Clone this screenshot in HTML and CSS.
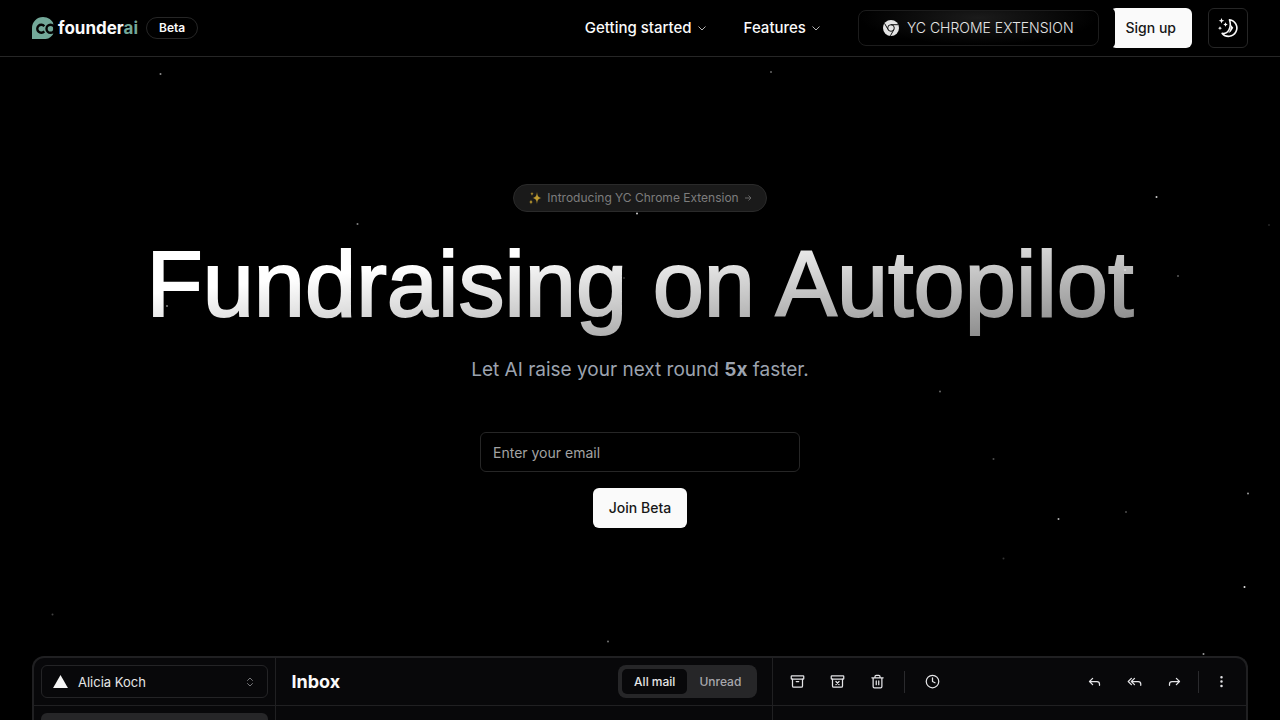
FILE: index.html
```html
<!DOCTYPE html>
<html lang="en">
<head>
    <meta charset="UTF-8">
    <meta name="viewport" content="width=device-width, initial-scale=1">
    <title>cofounderai</title>

    <link rel="stylesheet" href="styles.css">
</head>
<body>
<svg class="stars" viewBox="0 0 1280 720" preserveAspectRatio="xMidYMin slice" aria-hidden="true">
    <circle cx="160.500" cy="74" r="1" opacity=".55"/>
    <circle cx="771" cy="72" r="1" opacity=".4"/>
    <circle cx="1156.500" cy="197" r="1" opacity=".8"/>
    <circle cx="357.500" cy="224" r="1" opacity=".5"/>
    <circle cx="637" cy="213.500" r="1" opacity=".8"/>
    <circle cx="1269" cy="225" r="1" opacity=".15"/>
    <circle cx="1178" cy="276" r="1" opacity=".35"/>
    <circle cx="167" cy="306" r="1" opacity=".5"/>
    <circle cx="1125" cy="270" r="1" opacity=".4"/>
    <circle cx="624" cy="278" r="1" opacity=".2"/>
    <circle cx="940" cy="391.500" r="1" opacity=".4"/>
    <circle cx="993.500" cy="459" r="1" opacity=".3"/>
    <circle cx="1248" cy="493.500" r="1" opacity=".6"/>
    <circle cx="1126" cy="512" r="1" opacity=".3"/>
    <circle cx="1058.500" cy="519" r="1" opacity=".7"/>
    <circle cx="1003.500" cy="558.500" r="1" opacity=".2"/>
    <circle cx="1244.500" cy="587" r="1" opacity=".9"/>
    <circle cx="52.500" cy="614.500" r="1" opacity=".25"/>
    <circle cx="608" cy="641.500" r="1" opacity=".45"/>
    <circle cx="1203.500" cy="654" r="1" opacity=".6"/>
</svg>

<header class="header">
    <a class="brand" href="#">
        <svg class="logo" viewBox="0 0 24 22" aria-hidden="true">
            <path fill="#73a899" d="M0 22V11A11 11 0 0 1 11 0c5 0 9.300 3 11 7.500v8A11 11 0 0 1 11 22z"/>
            <path fill="none" stroke="#050505" stroke-width="2.400" d="M12.300 9.200a4 4 0 1 0 0 5.200"/>
            <circle cx="18.500" cy="11.800" r="4" fill="none" stroke="#050505" stroke-width="2.400"/>
            <path fill="#000" d="M21.300 6H24v12h-2.700z"/>
        </svg>
        <span class="wordmark">founder<span class="ai">ai</span></span>
    </a>
    <span class="badge">Beta</span>

    <nav class="nav">
        <button class="navItem">Getting started
            <svg class="chevron" viewBox="0 0 24 24"><path d="m5 9 7 7 7-7"/></svg>
        </button>
        <button class="navItem">Features
            <svg class="chevron" viewBox="0 0 24 24"><path d="m5 9 7 7 7-7"/></svg>
        </button>
    </nav>
    <div class="extensionHolder">
        <a class="extension" href="#">
            <svg class="chrome" viewBox="0 0 16 16" aria-hidden="true">
                <circle cx="8" cy="8" r="8" fill="#e4e4e4"/>
                <circle cx="8" cy="8" r="3.300" fill="none" stroke="#111"/>
                <path fill="none" stroke="#111" d="M8 4.700h7.300M5.100 9.600 1.600 3.500M10.900 9.600l-3.500 6.200"/>
            </svg>
            YC CHROME EXTENSION
        </a>
    </div>
    <a class="btn signUp" href="#">Sign up</a>
    <button class="themeToggle" aria-label="Toggle theme">
        <svg viewBox="0 0 20 20" aria-hidden="true">
            <path fill="none" stroke="#fafafa" stroke-width="1.600" stroke-linejoin="round" d="M11.500 1.800a8.300 8.300 0 1 1-7.300 13.600c5.800.8 9.800-5.700 7.300-13.600z"/>
            <path fill="#fafafa" d="m3.500 0 .8 2 2 .8-2 .8-.8 2-.8-2-2-.8 2-.8zM7.500 4.300l.7 1.500 1.500.7-1.500.7-.7 1.500-.7-1.500-1.500-.7 1.500-.7zM2 8.200l.6 1.400 1.400.6-1.400.6L2 12.200l-.6-1.400-1.400-.6 1.400-.6zM13 7l2.300 2.800-2.600 4-2.500 1.500c1.800-2.400 2.600-5 2.800-8.300z"/>
        </svg>
    </button>
</header>

<main class="main">
    <section class="hero">
        <a class="announce" href="#">
            <svg class="sparkles" viewBox="0 0 14 14" aria-hidden="true">
                <path d="M9 1c.5 4 1 5.200 4.500 6C10 7.800 9.500 9 9 13 8.500 9 8 7.800 4.500 7 8 6.200 8.500 5 9 1zM3 8.500c.3 1.800.7 2.200 2 2.500-1.300.3-1.700.7-2 2.500-.3-1.800-.7-2.200-2-2.500 1.300-.3 1.700-.7 2-2.500zM4 .8c.2 1.400.5 1.700 1.700 2C4.500 3.100 4.200 3.500 4 4.900c-.2-1.400-.5-1.800-1.700-2.100C3.500 2.500 3.800 2.200 4 .8z"/>
            </svg>
            <span>Introducing YC Chrome Extension</span>
            <svg class="arrow" viewBox="0 0 8 8" aria-hidden="true"><path d="M1 4h6M4.500 1.500 7 4 4.500 6.500"/></svg>
        </a>
        <h1 class="title">Fundraising on Autopilot</h1>
        <p class="subtitle">Let AI raise your next round <b>5x</b> faster.</p>
        <form class="signupForm">
            <input type="email" class="email" placeholder="Enter your email" aria-label="Email">
            <button class="btn" type="submit">Join Beta</button>
        </form>
    </section>

    <section class="mail">
        <div class="cell">
            <button class="account">
                <svg class="triangle" viewBox="0 0 16 14"><path d="M8 0l8 14H0z"/></svg>
                Alicia Koch
                <svg class="icon sorter" viewBox="0 0 24 24"><path d="m7 15 5 5 5-5M7 9l5-5 5 5"/></svg>
            </button>
        </div>
        <div class="cell inboxBar">
            <h2 class="inbox">Inbox</h2>
            <div class="tabs">
                <button class="tab active">All mail</button>
                <button class="tab">Unread</button>
            </div>
        </div>
        <div class="cell toolbar">
            <button class="tool" aria-label="Archive"><svg class="icon" viewBox="0 0 24 24"><rect x="2" y="3" width="20" height="5" rx="1"/><path d="M4 8v11a2 2 0 0 0 2 2h12a2 2 0 0 0 2-2V8M10 12h4"/></svg></button>
            <button class="tool" aria-label="Move to junk"><svg class="icon" viewBox="0 0 24 24"><rect x="2" y="3" width="20" height="5" rx="1"/><path d="M4 8v11a2 2 0 0 0 2 2h12a2 2 0 0 0 2-2V8M9.500 17l5-5M9.500 12l5 5"/></svg></button>
            <button class="tool" aria-label="Move to trash"><svg class="icon" viewBox="0 0 24 24"><path d="M3 6h18M19 6v14a2 2 0 0 1-2 2H7a2 2 0 0 1-2-2V6M8 6V4a2 2 0 0 1 2-2h4a2 2 0 0 1 2 2v2M10 11v6M14 11v6"/></svg></button>
            <span class="divider wide"></span>
            <button class="tool" aria-label="Snooze"><svg class="icon" viewBox="0 0 24 24"><circle cx="12" cy="12" r="10"/><path d="M12 6v6l4 2"/></svg></button>
            <span class="spacer"></span>
            <button class="tool" aria-label="Reply"><svg class="icon" viewBox="0 0 24 24"><path d="m9 17-5-5 5-5M20 18v-2a4 4 0 0 0-4-4H4"/></svg></button>
            <button class="tool" aria-label="Reply all"><svg class="icon" viewBox="0 0 24 24"><path d="m7 17-5-5 5-5M12 17l-5-5 5-5M22 18v-2a4 4 0 0 0-4-4H7"/></svg></button>
            <button class="tool" aria-label="Forward"><svg class="icon" viewBox="0 0 24 24"><path d="m15 17 5-5-5-5M4 18v-2a4 4 0 0 1 4-4h12"/></svg></button>
            <span class="divider"></span>
            <button class="tool" aria-label="More"><svg class="icon" viewBox="0 0 24 24"><circle cx="12" cy="5" r="1"/><circle cx="12" cy="12" r="1"/><circle cx="12" cy="19" r="1"/></svg></button>
        </div>
        <div class="pane"><div class="folder"></div></div>
        <div class="pane"></div>
        <div class="pane"></div>
    </section>
</main>
</body>
</html>
```
FILE: styles.css
```css
* {
    box-sizing: border-box;
}

body {
    margin: 0;
    min-height: 100vh;
    display: flex;
    flex-direction: column;
    position: relative;
    background-color: #000;
    color: #fafafa;
    font-family: Inter, sans-serif;
    font-size: 14px;
    line-height: 20px;
}

a {
    color: inherit;
    text-decoration: none;
}

button, input {
    font: inherit;
    color: inherit;
    background: none;
    border: none;
    padding: 0;
}

svg {
    display: block;
    flex-shrink: 0;
}

.stars {
    position: absolute;
    top: 0;
    left: 0;
    width: 100%;
    height: 100%;
    fill: #fff;
    z-index: 2;
    pointer-events: none;
}

.header {
    display: flex;
    align-items: center;
    height: 57px;
    padding: 0 32px;
    border-bottom: 1px solid #262626;
}

.brand {
    display: flex;
    align-items: center;
    gap: 2px;
}

.logo {
    width: 24px;
    height: 22px;
}

.wordmark {
    font-size: 17px;
    font-weight: 700;
}

.ai {
    color: #73a899;
}

.badge {
    margin-left: 8px;
    padding: 2px 12px;
    border: 1px solid #262626;
    border-radius: 11px;
    font-size: 12px;
    font-weight: 600;
    line-height: 16px;
}

.nav {
    display: flex;
    gap: 4px;
    margin-left: auto;
}

.navItem {
    display: flex;
    align-items: center;
    gap: 4px;
    padding: 8px 16px;
    font-size: 15px;
    font-weight: 500;
}

.chevron {
    width: 12px;
    height: 12px;
    fill: none;
    stroke: #b5b5b5;
    stroke-width: 2;
}

/* sits over the left edge of the sign up button */
.extensionHolder {
    padding: 2px 16px;
    margin-left: 4px;
    border-radius: 5px;
    background: #000;
    z-index: 1;
}

.extension {
    display: flex;
    align-items: center;
    gap: 8px;
    height: 36px;
    padding: 0 24px;
    border: 1px solid #1c1c1c;
    border-radius: 8px;
    background: radial-gradient(ellipse at 50% 20%, #1b1b1b, #000 70%);
    color: #e5e5e5;
    font-weight: 300;
}

.chrome {
    width: 16px;
    height: 16px;
}

.btn {
    height: 40px;
    padding: 10px 16px;
    border-radius: 6px;
    background: #fafafa;
    color: #171717;
    font-weight: 500;
}

.signUp {
    margin-left: -5px;
}

.themeToggle {
    display: flex;
    align-items: center;
    justify-content: center;
    width: 40px;
    height: 40px;
    margin-left: 16px;
    border: 1px solid #262626;
    border-radius: 6px;
}

.themeToggle svg {
    width: 20px;
    height: 20px;
}

.main {
    flex: 1;
    display: flex;
    flex-direction: column;
    padding: 0 32px;
}

.hero {
    display: flex;
    flex-direction: column;
    align-items: center;
    padding: 127px 0 128px;
    text-align: center;
}

.announce {
    display: flex;
    align-items: center;
    gap: 5px;
    height: 28px;
    padding: 0 14px;
    border: 1px solid #2a2a2a;
    border-radius: 14px;
    background: #1a1a1a;
    color: #7d7d7d;
    font-size: 12px;
}

.sparkles {
    width: 14px;
    height: 14px;
    fill: #bd9a30;
}

.arrow {
    width: 8px;
    height: 8px;
    fill: none;
    stroke: #666;
}

.title {
    margin: 20px 0;
    font-family: "Liberation Sans", Arial, sans-serif;
    font-size: 92px;
    font-weight: 400;
    line-height: 104px;
    background: linear-gradient(to bottom right, #fff 30%, rgba(255, 255, 255, .5));
    -webkit-background-clip: text;
    background-clip: text;
    color: transparent;
    -webkit-text-stroke: 2px transparent;
}

.subtitle {
    margin: 0 0 48px;
    color: #9ca3af;
    font-size: 19px;
    line-height: 28px;
}

.signupForm {
    display: flex;
    flex-direction: column;
    align-items: center;
    gap: 16px;
    width: 320px;
}

.email {
    width: 100%;
    height: 40px;
    padding: 0 12px;
    border: 1px solid #262626;
    border-radius: 6px;
}

.email::placeholder {
    color: #a3a3a3;
}

.mail {
    flex: 1;
    display: grid;
    grid-template-columns: 20fr 41fr 39fr;
    grid-template-rows: 48px 1fr;
    border: 2px solid #202022;
    border-bottom: none;
    border-radius: 12px 12px 0 0;
    background: #08080a;
    font-size: 13px;
}

.cell {
    display: flex;
    align-items: center;
    padding: 0 7px;
    border-bottom: 1px solid #202022;
}

.cell:not(.toolbar), .pane:not(:last-child) {
    border-right: 1px solid #202022;
}

.account {
    display: flex;
    align-items: center;
    gap: 10px;
    width: 100%;
    height: 33px;
    padding: 0 11px;
    border: 1px solid #242426;
    border-radius: 6px;
    color: #e5e5e5;
}

.triangle {
    width: 15px;
    height: 13px;
    fill: #f5f5f5;
}

.icon {
    width: 15px;
    height: 15px;
    fill: none;
    stroke: #e4e4e7;
    stroke-width: 2;
    stroke-linecap: round;
    stroke-linejoin: round;
}

.sorter {
    width: 12px;
    height: 12px;
    margin-left: auto;
    stroke: #77777a;
}

.inboxBar {
    justify-content: space-between;
    padding: 0 15px;
}

.inbox {
    margin: 0;
    font-size: 18px;
    font-weight: 700;
}

.tabs {
    display: flex;
    height: 33px;
    padding: 4px;
    border-radius: 8px;
    background: #262628;
}

.tab {
    padding: 0 12px;
    border-radius: 5px;
    color: #a8a8ad;
    font-size: 12px;
    font-weight: 500;
}

.active {
    background: #08080a;
    color: #e5e5e5;
}

.toolbar {
    gap: 6px;
}

.tool {
    display: flex;
    align-items: center;
    justify-content: center;
    width: 34px;
    height: 34px;
}

.divider {
    width: 1px;
    height: 22px;
    background: #2a2a2d;
}

.wide {
    margin: 0 4px;
}

.spacer {
    flex: 1;
}

.pane {
    padding: 7px 7px 0;
}

.folder {
    height: 100%;
    border-radius: 6px 6px 0 0;
    background: #262628;
}
```
